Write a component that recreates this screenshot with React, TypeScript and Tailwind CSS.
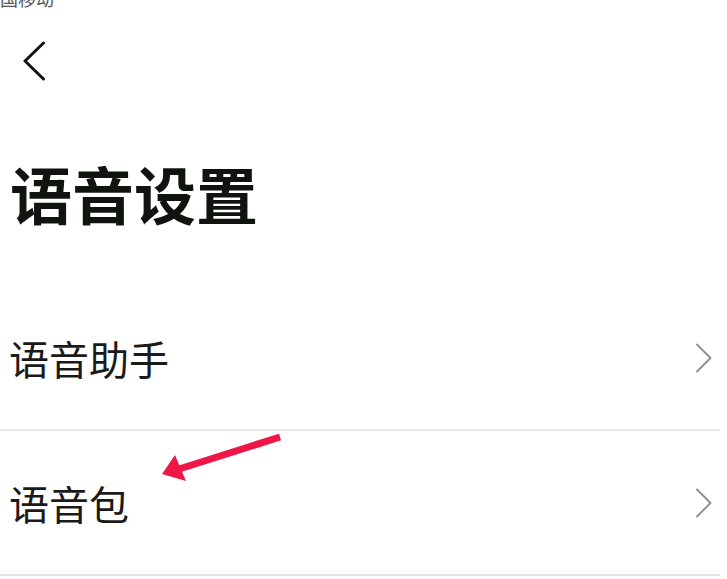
// Voice settings page: status strip, back button, big title, two list rows.

const FONT = { fontFamily: '"Noto Sans CJK SC", "Noto Sans", sans-serif' }

function ChevronRight() {
  return (
    <svg width="18" height="30" viewBox="0 0 18 30" className="shrink-0">
      <path d="M2 1.5 L15.5 15 L2 28.5" fill="none" stroke="#8e8e8e" strokeWidth="1.8" strokeLinecap="round" strokeLinejoin="round" />
    </svg>
  )
}

const ROWS = ['语音助手', '语音包']

export default function App() {
  return (
    <div className="relative h-[579px] w-[727px] overflow-hidden bg-white" style={FONT}>
      {/* clipped status bar carrier name */}
      <div className="h-[10px] overflow-hidden">
        <div className="-mt-[11px] text-[18px] leading-[18px] text-[#555]">国移动</div>
      </div>

      <div className="ml-[22px] mt-[31px] h-[40px] w-[26px]">
        <svg width="26" height="40" viewBox="0 0 26 40">
          <path d="M21.5 2 L3 20 L21.5 38" fill="none" stroke="#111" strokeWidth="3" strokeLinecap="round" strokeLinejoin="round" />
        </svg>
      </div>

      <h1 className="ml-[10px] mt-[81px] text-[62px] font-bold leading-[62px] text-[#0f140f]">语音设置</h1>

      <ul className="mt-[62px] pr-[7px]">
        {ROWS.map((label) => (
          <li key={label} className="flex h-[145px] items-center justify-between border-b-2 border-[#e6e6e6] pl-[9px] pr-[7px]">
            <span className="text-[40px] leading-[40px] text-[#1a1a1a]">{label}</span>
            <ChevronRight />
          </li>
        ))}
      </ul>

      {/* red annotation arrow */}
      <svg className="pointer-events-none absolute left-0 top-0" width="727" height="579">
        <line x1="280" y1="437" x2="176" y2="470" stroke="#ee1748" strokeWidth="7" strokeLinecap="butt" />
        <polygon points="162,474 175,455 186,481" fill="#ee1748" />
      </svg>
    </div>
  )
}
